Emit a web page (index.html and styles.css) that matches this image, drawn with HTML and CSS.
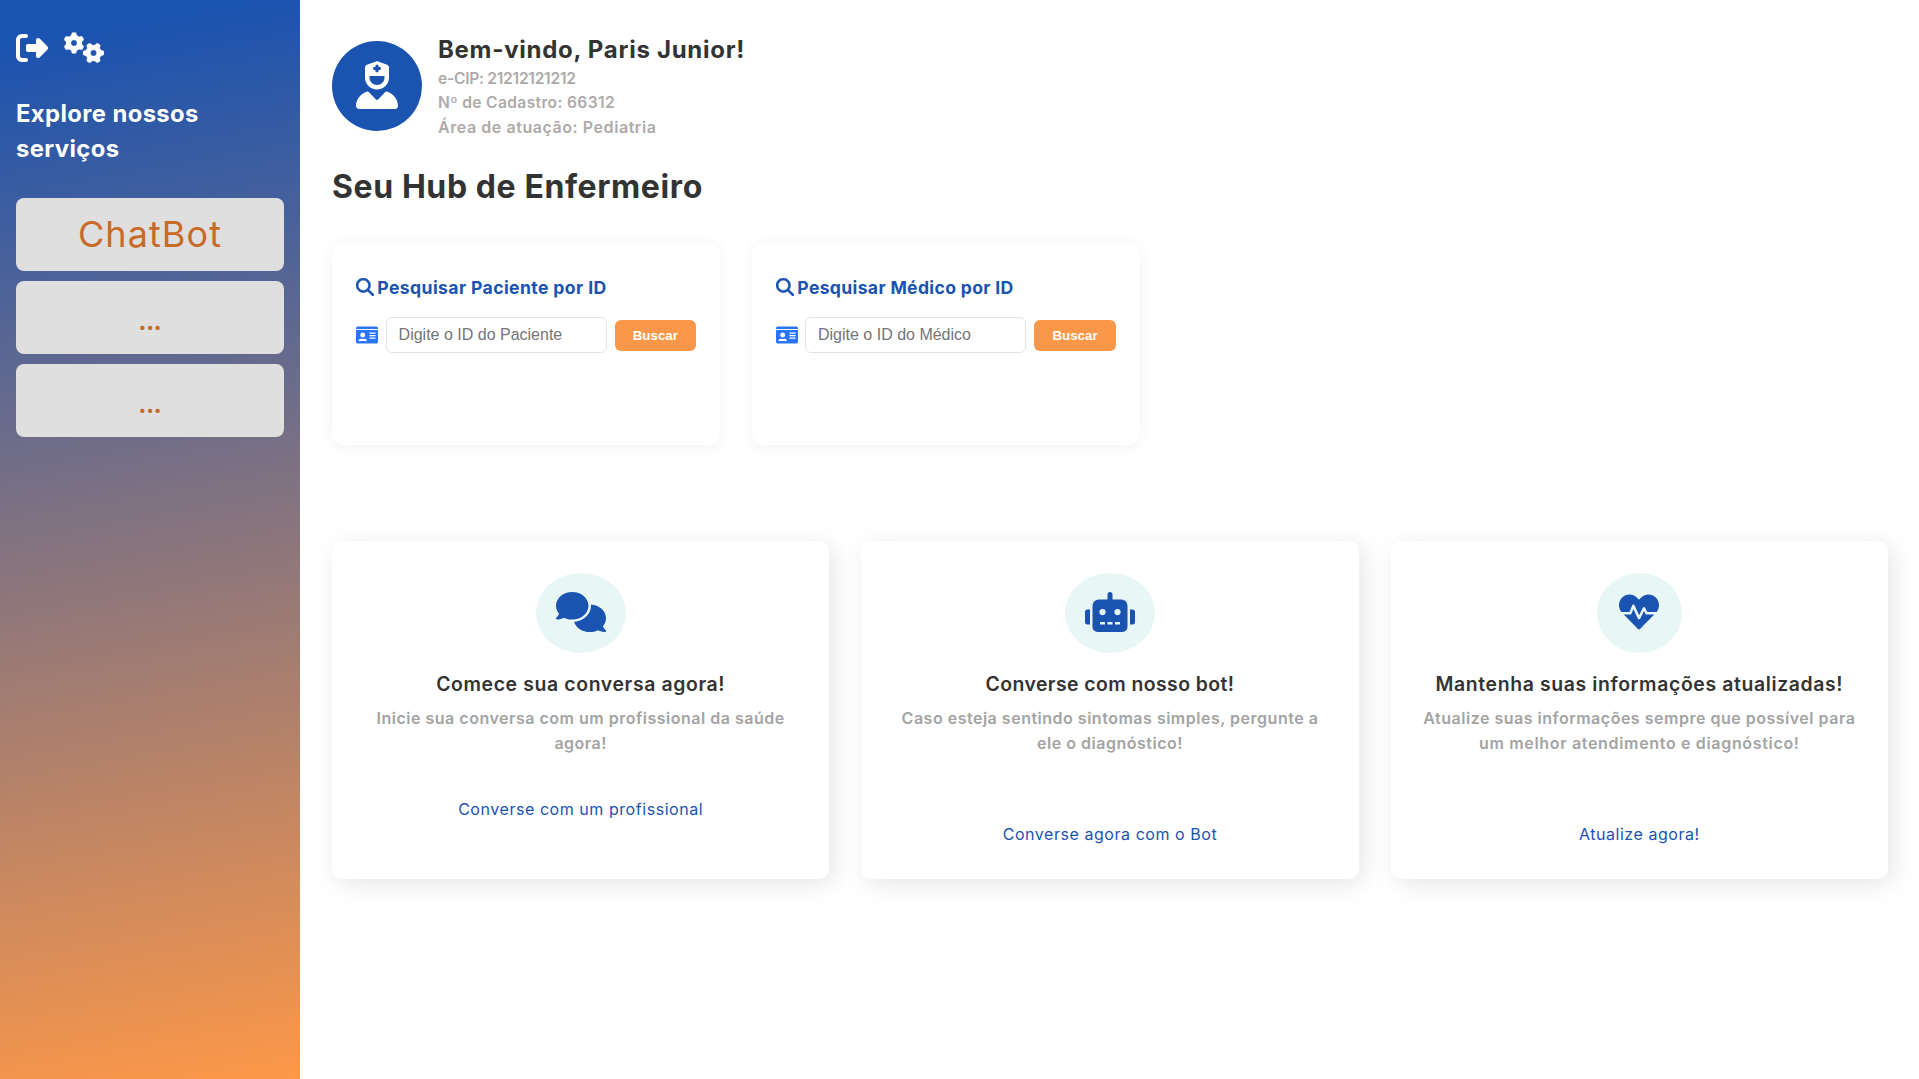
FILE: index.html
```html
<!DOCTYPE html>
<html lang="pt-BR">
<head>
<meta charset="utf-8">
<title>Hub de Enfermeiro</title>
<link rel="stylesheet" href="styles.css">
</head>
<body>
<svg class="sprite" aria-hidden="true">
  <symbol id="i-exit" viewBox="0 0 512 512"><path d="M377.9 105.9L500.7 228.7c7.2 7.2 11.3 17.1 11.3 27.3s-4.1 20.1-11.3 27.3L377.9 406.1c-6.4 6.4-15 9.9-24 9.9c-18.7 0-33.9-15.2-33.9-33.9l0-62.1-128 0c-17.7 0-32-14.3-32-32l0-64c0-17.7 14.3-32 32-32l128 0 0-62.1c0-18.7 15.2-33.9 33.9-33.9c9 0 17.6 3.6 24 9.9zM160 96L96 96c-17.7 0-32 14.3-32 32l0 256c0 17.7 14.3 32 32 32l64 0c17.7 0 32 14.3 32 32s-14.3 32-32 32l-64 0c-53 0-96-43-96-96L0 128C0 75 43 32 96 32l64 0c17.7 0 32 14.3 32 32s-14.3 32-32 32z"/></symbol>
  <symbol id="i-gears" viewBox="0 0 640 512"><path id="gear" d="M308.5 135.3c7.1-6.3 9.9-16.2 6.2-25c-2.3-5.3-4.8-10.5-7.6-15.5L304 89.4c-3-5-6.3-9.9-9.8-14.6c-5.7-7.6-15.7-10.1-24.7-7.1l-28.2 9.3c-10.7-8.8-23-16-36.2-20.9L199 27.1c-1.9-9.3-9.1-16.7-18.5-17.8C173.9 8.4 167.2 8 160.4 8h-.7c-6.8 0-13.5 .4-20.1 1.2c-9.4 1.1-16.6 8.6-18.5 17.8L115 56.1c-13.3 5-25.5 12.1-36.2 20.9L50.5 67.8c-9-3-19-.5-24.7 7.1c-3.5 4.7-6.8 9.6-9.9 14.6l-3 5.3c-2.8 5-5.3 10.2-7.6 15.6c-3.7 8.7-.9 18.6 6.2 25l22.2 19.8C32.6 161.9 32 168.9 32 176s.6 14.1 1.7 20.9L11.5 216.7c-7.1 6.3-9.9 16.2-6.2 25c2.3 5.3 4.8 10.5 7.6 15.6l3 5.2c3 5.1 6.3 9.9 9.9 14.6c5.7 7.6 15.7 10.1 24.7 7.1l28.2-9.3c10.7 8.8 23 16 36.2 20.9l6.1 29.1c1.9 9.3 9.1 16.7 18.5 17.8c6.7 .8 13.5 1.2 20.4 1.2s13.7-.4 20.4-1.2c9.4-1.1 16.6-8.6 18.5-17.8l6.1-29.1c13.3-5 25.5-12.1 36.2-20.9l28.2 9.3c9 3 19 .5 24.7-7.1c3.5-4.7 6.8-9.5 9.8-14.6l3.1-5.4c2.8-5 5.3-10.2 7.6-15.5c3.7-8.7 .9-18.6-6.2-25l-22.2-19.8c1.1-6.8 1.7-13.8 1.7-20.9s-.6-14.1-1.7-20.9l22.2-19.8zM112 176a48 48 0 1 1 96 0 48 48 0 1 1 -96 0z"/><use href="#gear" transform="translate(472 336) rotate(90) translate(-160 -176)"/></symbol>
  <symbol id="i-nurse" viewBox="0 0 448 512"><path d="M96 128V70.2c0-13.3 8.3-25.3 20.8-30l96-36c7.2-2.7 15.2-2.7 22.5 0l96 36c12.5 4.7 20.8 16.6 20.8 30V128h-.3c.2 2.6 .3 5.3 .3 8v40c0 70.7-57.3 128-128 128s-128-57.3-128-128V136c0-2.7 .1-5.4 .3-8H96zm48 48c0 44.2 35.8 80 80 80s80-35.8 80-80V160H144v16zM111.9 327.7c10.5-3.4 21.8 .4 29.4 8.5l71 75.5c6.3 6.7 17 6.7 23.3 0l71-75.5c7.6-8.1 18.9-11.9 29.4-8.5C401 348.6 448 409.4 448 481.3c0 17-13.8 30.7-30.7 30.7H30.7C13.8 512 0 498.2 0 481.3c0-71.9 47-132.7 111.9-153.6zM208 48V64H192c-4.4 0-8 3.6-8 8V88c0 4.4 3.6 8 8 8h16v16c0 4.4 3.6 8 8 8h16c4.4 0 8-3.6 8-8V96h16c4.4 0 8-3.6 8-8V72c0-4.4-3.6-8-8-8H240V48c0-4.4-3.6-8-8-8H216c-4.4 0-8 3.6-8 8z"/></symbol>
  <symbol id="i-search" viewBox="0 0 512 512"><path d="M416 208c0 45.9-14.9 88.3-40 122.7L502.6 457.4c12.5 12.5 12.5 32.8 0 45.3s-32.8 12.5-45.3 0L330.7 376c-34.4 25.2-76.8 40-122.7 40C93.1 416 0 322.9 0 208S93.1 0 208 0S416 93.1 416 208zM208 352a144 144 0 1 0 0-288 144 144 0 1 0 0 288z"/></symbol>
  <symbol id="i-card" viewBox="0 0 576 512"><path d="M528 32H48C21.5 32 0 53.5 0 80v16h576V80c0-26.5-21.5-48-48-48zM0 432c0 26.5 21.5 48 48 48h480c26.5 0 48-21.5 48-48V128H0v304zm352-232c0-4.4 3.6-8 8-8h144c4.4 0 8 3.6 8 8v16c0 4.4-3.6 8-8 8H360c-4.4 0-8-3.6-8-8v-16zm0 64c0-4.4 3.6-8 8-8h144c4.4 0 8 3.6 8 8v16c0 4.4-3.6 8-8 8H360c-4.4 0-8-3.6-8-8v-16zm0 64c0-4.4 3.6-8 8-8h144c4.4 0 8 3.6 8 8v16c0 4.4-3.6 8-8 8H360c-4.4 0-8-3.6-8-8v-16zM176 192c35.3 0 64 28.7 64 64s-28.7 64-64 64-64-28.7-64-64 28.7-64 64-64zM67.1 396.2C75.5 370.5 99.6 352 128 352h8.2c12.3 5.1 25.7 8 39.8 8s27.6-2.9 39.8-8h8.2c28.4 0 52.5 18.5 60.9 44.2 3.2 9.9-5.2 19.8-15.6 19.8H82.7c-10.4 0-18.8-10-15.6-19.8z"/></symbol>
  <symbol id="i-chat" viewBox="0 0 640 512"><path d="M208 352c114.9 0 208-78.8 208-176S322.9 0 208 0S0 78.8 0 176c0 38.6 14.7 74.3 39.6 103.4c-3.5 9.4-8.7 17.7-14.2 24.7c-4.8 6.2-9.7 11-13.3 14.3c-1.8 1.6-3.3 2.9-4.3 3.7c-.5 .4-.9 .7-1.1 .8l-.2 .2C1 327.2-1.4 334.4 .8 340.9S9.1 352 16 352c21.8 0 43.8-5.6 62.1-12.5c9.2-3.5 17.8-7.4 25.2-11.4C134.1 343.3 169.8 352 208 352zM448 176c0 112.3-99.1 196.9-216.5 207C255.8 457.4 336.4 512 432 512c38.2 0 73.9-8.7 104.7-23.9c7.5 4 16 7.9 25.2 11.4c18.3 6.9 40.3 12.5 62.1 12.5c6.9 0 13.1-4.5 15.2-11.1c2.1-6.6-.2-13.8-5.8-17.9l-.2-.2c-.2-.2-.6-.4-1.1-.8c-1-.8-2.5-2-4.3-3.7c-3.6-3.3-8.5-8.1-13.3-14.3c-5.5-7-10.7-15.4-14.2-24.7c24.9-29 39.6-64.7 39.6-103.4c0-92.8-84.9-168.9-192.6-175.5c.4 5.1 .6 10.3 .6 15.5z"/></symbol>
  <symbol id="i-robot" viewBox="0 0 640 512"><path d="M32 224H64V416H32A32 32 0 0 1 0 384V256A32 32 0 0 1 32 224Zm512-48V448a64 64 0 0 1-64 64H160a64 64 0 0 1-64-64V176a80 80 0 0 1 80-80H288V32a32 32 0 0 1 64 0V96H464A80 80 0 0 1 544 176ZM264 256a40 40 0 1 0-40 40A40 40 0 0 0 264 256Zm-8 128H192v32h64Zm96 0H288v32h64ZM456 256a40 40 0 1 0-40 40A40 40 0 0 0 456 256Zm-8 128H384v32h64ZM640 256V384a32 32 0 0 1-32 32H576V224h32A32 32 0 0 1 640 256Z"/></symbol>
  <symbol id="i-heart" viewBox="0 0 512 512"><path d="M320.2 243.8l-49.7 99.4c-6 12.1-23.4 11.7-28.9-.6l-56.9-126.3-30 71.7H60.6l182.5 186.5c7.1 7.3 18.6 7.3 25.7 0L451.4 288H342.3l-22.1-44.2zM473.7 73.9l-2.4-2.5c-51.5-52.6-135.8-52.6-187.4 0L256 100l-27.9-28.5c-51.5-52.7-135.9-52.7-187.4 0l-2.4 2.4C-10.4 123.7-12.5 203 31 256h102.4l35.9-86.2c5.4-12.9 23.6-13.1 29.4-.4l58.2 129.3 49-97.9c5.9-11.8 22.7-11.8 28.6 0l27.6 55.2H481c43.5-53 41.4-132.3-7.3-182.1z"/></symbol>
</svg>

<div class="layout">
  <aside class="sidebar">
    <nav class="sidebar-tools">
      <svg class="icon-exit"><use href="#i-exit"/></svg>
      <svg class="icon-gears"><use href="#i-gears"/></svg>
    </nav>
    <h3 class="sidebar-title">Explore nossos serviços</h3>
    <div class="services">
      <a class="service">ChatBot</a>
      <a class="service service-more">...</a>
      <a class="service service-more">...</a>
    </div>
  </aside>

  <main class="content">
    <header class="profile">
      <div class="avatar"><svg class="icon-nurse"><use href="#i-nurse"/></svg></div>
      <div class="profile-info">
        <h1 class="welcome">Bem-vindo, Paris Junior!</h1>
        <p class="info-ecip">e-CIP: 21212121212</p>
        <p class="info-register">Nº de Cadastro: 66312</p>
        <p class="info-area">Área de atuação: Pediatria</p>
      </div>
    </header>
    <h2 class="hub-title">Seu Hub de Enfermeiro</h2>

    <section class="searches">
      <div class="search-card">
        <h3 class="search-title"><svg class="icon-search"><use href="#i-search"/></svg>Pesquisar Paciente por ID</h3>
        <div class="search-row">
          <svg class="icon-card"><use href="#i-card"/></svg>
          <input class="search-input" type="text" placeholder="Digite o ID do Paciente">
          <button class="search-button">Buscar</button>
        </div>
      </div>
      <div class="search-card search-doctor">
        <h3 class="search-title"><svg class="icon-search"><use href="#i-search"/></svg>Pesquisar Médico por ID</h3>
        <div class="search-row">
          <svg class="icon-card"><use href="#i-card"/></svg>
          <input class="search-input" type="text" placeholder="Digite o ID do Médico">
          <button class="search-button">Buscar</button>
        </div>
      </div>
    </section>

    <section class="features">
      <article class="feature feature-chat">
        <div class="badge"><svg class="icon-wide"><use href="#i-chat"/></svg></div>
        <h3>Comece sua conversa agora!</h3>
        <p>Inicie sua conversa com um profissional da saúde<br>agora!</p>
        <a class="feature-link">Converse com um profissional</a>
      </article>
      <article class="feature feature-bot">
        <div class="badge"><svg class="icon-wide"><use href="#i-robot"/></svg></div>
        <h3>Converse com nosso bot!</h3>
        <p>Caso esteja sentindo sintomas simples, pergunte a<br>ele o diagnóstico!</p>
        <a class="feature-link">Converse agora com o Bot</a>
      </article>
      <article class="feature">
        <div class="badge badge-heart"><svg class="icon-square"><use href="#i-heart"/></svg></div>
        <h3>Mantenha suas informações atualizadas!</h3>
        <p>Atualize suas informações sempre que possível para<br><span class="wider">um melhor atendimento e diagnóstico!</span></p>
        <a class="feature-link">Atualize agora!</a>
      </article>
    </section>
  </main>
</div>
</body>
</html>
```
FILE: styles.css
```css
* { box-sizing: border-box; margin: 0; padding: 0; }

body {
  font-family: Inter, "Open Sans", sans-serif;
  background: #fff;
  color: #333;
}

svg { display: block; fill: currentColor; flex: none; }
.sprite { position: absolute; width: 0; height: 0; }

.layout { display: flex; height: 1079px; overflow: hidden; }

/* Sidebar */
.sidebar {
  flex: none;
  width: 300px;
  padding: 32px 16px;
  color: #fff;
  background: linear-gradient(170deg, #1a53b0 4%, #fd9848);
}
.sidebar-tools { display: flex; gap: 16px; }
.icon-exit { width: 32px; height: 32px; }
.icon-gears { width: 40px; height: 32px; stroke: currentColor; stroke-width: 3px; overflow: visible; }
.sidebar-title {
  margin-top: 32px;
  font-size: 23.8px;
  line-height: 35px;
  font-weight: 700;
  letter-spacing: 0.4px;
}
.services { display: flex; flex-direction: column; gap: 10px; margin-top: 32px; }
.service {
  height: 73px;
  border-radius: 8px;
  background: #dfdfdf;
  color: #c86b28;
  font-size: 36px;
  line-height: 73px;
  letter-spacing: 1.1px;
  text-align: center;
}
.service-more { font-size: 32px; letter-spacing: -1.5px; line-height: 76px; text-indent: -1.5px; }

/* Profile header */
.content { flex: 1; padding: 32px 31px 32px 32px; }

.profile { display: flex; gap: 16px; height: 106.4px; }
.avatar {
  display: flex;
  align-items: center;
  justify-content: center;
  width: 90px;
  height: 90px;
  margin-top: 9px;
  padding-bottom: 2px;
  border-radius: 50%;
  background: #1a53b0;
  color: #fff;
}
.icon-nurse { width: 42px; height: 48px; }
.profile-info { padding-top: 1px; }
.welcome { font-size: 24px; line-height: 34.4px; font-weight: 700; letter-spacing: 0.72px; }
.profile-info p { font-size: 15.6px; line-height: 24px; font-weight: 600; color: #aeaaa9; }
.info-ecip { letter-spacing: -0.27px; }
.info-register { letter-spacing: 0.35px; }
.profile-info .info-area { font-size: 16px; letter-spacing: 0.56px; }
.hub-title {
  margin-top: 25px;
  font-size: 32px;
  line-height: 48px;
  font-weight: 700;
  letter-spacing: 0.59px;
}

/* Search cards */
.searches { display: flex; gap: 32px; margin-top: 31.6px; }
.search-card {
  width: 388px;
  height: 202px;
  padding: 31px 24px;
  border-radius: 12px;
  box-shadow: 0 2px 15px rgba(0, 0, 0, 0.06);
}
.search-title {
  display: flex;
  align-items: center;
  gap: 3.3px;
  color: #1a53b0;
  font-size: 17.6px;
  line-height: 27px;
  font-weight: 700;
  letter-spacing: 0.39px;
}
.search-doctor .search-title { letter-spacing: 0.33px; }
.icon-search { width: 18px; height: 18px; margin-top: -1px; stroke: currentColor; stroke-width: 10px; overflow: visible; }
.search-row { display: flex; align-items: center; gap: 8px; margin-top: 16px; }
.icon-card { width: 22px; height: 20px; margin-right: -0.4px; color: #2a75fb; }
.search-doctor .icon-card { margin-right: -1px; }
.search-input {
  width: 221px;
  height: 36px;
  padding: 0 12px;
  border: 1px solid #dfe6e9;
  border-radius: 6px;
  font: 16px "Liberation Sans", sans-serif;
}
.search-input::placeholder { color: #757575; }
.search-button {
  flex: 1;
  height: 31px;
  margin-top: 1px;
  border: 0;
  border-radius: 6px;
  background: #fb9749;
  color: #fff;
  font: bold 13.333px "Liberation Sans", sans-serif;
}

/* Feature cards */
.features {
  display: grid;
  grid-template-columns: repeat(3, 1fr);
  gap: 32px;
  margin-top: 96px;
}
.feature {
  display: flex;
  flex-direction: column;
  align-items: center;
  height: 338px;
  padding-top: 32px;
  border-radius: 10px;
  text-align: center;
  white-space: nowrap;
  box-shadow: 5px 5px 25px rgba(0, 0, 0, 0.1);
}
.badge {
  display: flex;
  align-items: center;
  justify-content: center;
  width: 90px;
  height: 80px;
  padding-bottom: 2px;
  border-radius: 50%;
  background: #e8f6f6;
  color: #1a53b0;
}
.badge-heart { width: 85px; }
.icon-wide { width: 50px; height: 40px; }
.icon-square { width: 40px; height: 40px; }
.feature h3 {
  margin-top: 17px;
  font-size: 19.4px;
  line-height: 28px;
  font-weight: 600;
  letter-spacing: 0.63px;
}
.feature-bot h3 { letter-spacing: 0.43px; }
.feature p {
  margin-top: 8px;
  font-size: 16px;
  line-height: 25px;
  font-weight: 600;
  letter-spacing: 0.51px;
  color: #a4a4a4;
}
.feature p .wider { letter-spacing: 0.67px; }
.feature-link {
  margin-top: 66px;
  font-size: 16px;
  line-height: 25px;
  letter-spacing: 0.55px;
  color: #1a53b0;
}
.feature-chat .feature-link { margin-top: 41px; }
```
